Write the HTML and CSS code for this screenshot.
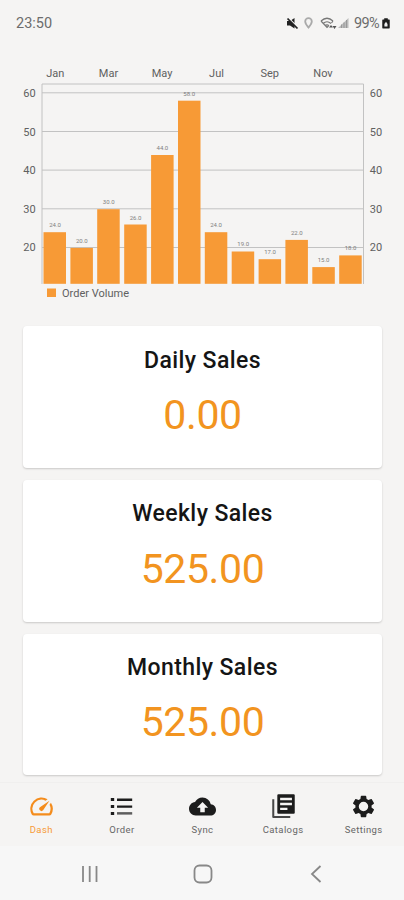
FILE: index.html
```html
<!DOCTYPE html>
<html lang="en">
<head>
<meta charset="utf-8">
<meta name="viewport" content="width=device-width, initial-scale=1">
<title>Dashboard</title>
<link rel="stylesheet" href="styles.css">
</head>
<body>
<header class="status">
  <span class="clock">23:50</span>
  <div class="indicators">
    <svg width="13" height="13" viewBox="0 0 13 13"><path d="M1 4h3L8.500 1v10.500L4 8.500H1z" fill="#222"/><path d="M2.200.8l10 10" stroke="#f5f4f3" stroke-width="1.500"/><path d="M1.500 1.500l10 10" stroke="#222" stroke-width="1.700"/></svg>
    <svg class="pin" width="9" height="12" viewBox="0 0 9 12"><path d="M4.500 10.500C2.500 8 1.200 6.500 1.200 4.500a3.300 3.300 0 0 1 6.600 0C7.800 6.500 6.500 8 4.500 10.500z" fill="none" stroke="#aaa" stroke-width="1.800"/></svg>
    <svg class="wifi" width="17" height="13" viewBox="0 0 17 13"><g fill="none" stroke="#777" stroke-width="1.200"><path d="M1 4q6-5.500 12 0M3 6.500q4-3.500 8 0M5 8.700q2-1.800 4 0M1 4l6 6.500L8.500 9M13 4l-1.500 2"/></g><path d="M9 10.500l2-2.500 2 2.500zM12.500 9h4l-2 3z" fill="#555"/></svg>
    <svg class="signal" width="11" height="12" viewBox="0 0 11 12"><path d="M0 11L10.500 1v10z" fill="#bbb"/><path d="M3.500 7.500V11M6 5.500V11M8.500 3V11" stroke="#999"/></svg>
    <span class="percent">99%</span>
    <svg class="battery" width="8" height="11" viewBox="0 0 9 12"><path d="M2.500 0h4v1.500H8q.7 0 .7.700v8.600q0 .8-.7.800H1q-.7 0-.7-.8V2.200q0-.7.700-.7h1.500z" fill="#1c1c1c"/><path d="M4.500 4L2.700 6.500v3h3.500v-3z" fill="#eee"/></svg>
  </div>
</header>

<main>
  <svg class="chart" width="404" height="260" viewBox="0 50 404 260" role="img" aria-label="Order Volume">
    <path class="grid" d="M42 92.800H363.500M42 131.500H363.500M42 170.100H363.500M42 208.800H363.500M42 247.500H363.500"/>
    <path class="frame" d="M42 284V84H363.500V284"/>
    <g class="bars">
      <rect x="43.500" y="232.200" width="22.500" height="51.600"/>
      <rect x="70.400" y="247.900" width="22.500" height="35.900"/>
      <rect x="97.200" y="209.200" width="22.500" height="74.600"/>
      <rect x="124.200" y="224.500" width="22.500" height="59.300"/>
      <rect x="151.100" y="155" width="22.500" height="128.800"/>
      <rect x="178" y="100.700" width="22.500" height="183.100"/>
      <rect x="204.800" y="232.200" width="22.500" height="51.600"/>
      <rect x="231.700" y="251.500" width="22.500" height="32.300"/>
      <rect x="258.600" y="259.200" width="22.500" height="24.600"/>
      <rect x="285.400" y="239.900" width="22.500" height="43.900"/>
      <rect x="312.300" y="267.100" width="22.500" height="16.700"/>
      <rect x="339.200" y="255.400" width="22.500" height="28.400"/>
    </g>
    <g class="values">
      <text x="55" y="227">24.0</text><text x="81.800" y="242.700">20.0</text><text x="108.700" y="204">30.0</text><text x="135.500" y="219.500">26.0</text><text x="162.400" y="150">44.0</text><text x="189.200" y="95.500">58.0</text><text x="216.100" y="227">24.0</text><text x="243.200" y="246.300">19.0</text><text x="270" y="254">17.0</text><text x="296.800" y="234.700">22.0</text><text x="323.600" y="262">15.0</text><text x="350.500" y="250">18.0</text>
    </g>
    <g class="axis">
      <text x="55.300" y="77">Jan</text><text x="108.500" y="77">Mar</text><text x="162" y="77">May</text><text x="216.500" y="77">Jul</text><text x="269.700" y="77">Sep</text><text x="323" y="77">Nov</text>
      <text x="29.500" y="96.800">60</text><text x="29.500" y="135.500">50</text><text x="29.500" y="174.100">40</text><text x="29.500" y="212.700">30</text><text x="29.500" y="251.300">20</text>
      <text x="376" y="96.800">60</text><text x="376" y="135.500">50</text><text x="376" y="174.100">40</text><text x="376" y="212.700">30</text><text x="376" y="251.300">20</text>
      <text x="95.500" y="297">Order Volume</text>
    </g>
    <rect class="key" x="47" y="288.500" width="9" height="8.500"/>
  </svg>

  <div class="cards">
    <section class="card"><h2>Daily Sales</h2><p>0.00</p></section>
    <section class="card"><h2>Weekly Sales</h2><p>525.00</p></section>
    <section class="card"><h2>Monthly Sales</h2><p>525.00</p></section>
  </div>
</main>

<nav class="tabs">
  <a class="tab active">
    <svg width="27" height="27" viewBox="0 0 24 24"><path d="M20.380 8.570l-1.230 1.850a8 8 0 0 1-.22 7.580H5.070A8 8 0 0 1 15.580 6.850l1.850-1.230A10 10 0 0 0 3.350 19a2 2 0 0 0 1.720 1h13.850a2 2 0 0 0 1.740-1 10 10 0 0 0-.27-10.440zM10.590 15.410a2 2 0 0 0 2.830 0l5.660-8.490-8.490 5.660a2 2 0 0 0 0 2.830z"/></svg>
    <span>Dash</span></a>
  <a class="tab">
    <svg width="27" height="27" viewBox="0 0 24 24"><path d="M2.500 4.500h3v2.700h-3zM8 4.800h13.500v2.300H8zM2.500 10.700h3v2.700h-3zM8 11h13.500v2.200H8zM2.500 16.800h3v2.700h-3z"/><path d="M8 17h13.500v2.200H8z" opacity=".7"/></svg>
    <span>Order</span></a>
  <a class="tab">
    <svg width="27" height="27" viewBox="0 0 24 24"><path d="M19.350 10.040C18.670 6.590 15.640 4 12 4 9.110 4 6.600 5.640 5.350 8.040 2.340 8.360 0 10.910 0 14c0 3.310 2.690 6 6 6h13c2.760 0 5-2.240 5-5 0-2.640-2.050-4.780-4.650-4.960zM14 13v4h-4v-4H7l5-5 5 5h-3z"/></svg>
    <span>Sync</span></a>
  <a class="tab">
    <svg width="27" height="27" viewBox="0 0 24 24"><path fill-rule="evenodd" d="M7.500 1h13.500q1 0 1 1v15.500q0 1-1 1H7.500q-1 0-1-1V2q0-1 1-1zM9 4.300v2.200h10.500V4.300zM9 8.700v2.200h10.500V8.700zM9 13v2.200h6.500V13z"/><path d="M2 5.500h1.800v15H18v1.800H3q-1 0-1-1z" opacity=".8"/></svg>
    <span>Catalogs</span></a>
  <a class="tab">
    <svg width="27" height="27" viewBox="0 0 24 24"><path fill-rule="evenodd" d="M19.140 12.940c.04-.3.060-.61.060-.94s-.02-.64-.07-.94l2.030-1.580a.49.49 0 0 0 .12-.61l-1.920-3.320a.49.49 0 0 0-.59-.22l-2.390.96a7 7 0 0 0-1.620-.94L14.400 2.810a.48.48 0 0 0-.48-.41h-3.840a.47.47 0 0 0-.47.410L9.250 5.350a7.200 7.200 0 0 0-1.620.94l-2.390-.96a.48.48 0 0 0-.59.220L2.740 8.870a.47.47 0 0 0 .12.610l2.030 1.580a6 6 0 0 0 0 1.880l-2.030 1.580a.49.49 0 0 0-.12.610l1.920 3.320c.12.220.37.290.59.220l2.390-.96c.5.380 1.030.7 1.620.94l.36 2.540c.05.240.24.410.48.410h3.840c.24 0 .44-.17.470-.41l.36-2.540a7 7 0 0 0 1.620-.94l2.390.96c.22.080.47 0 .59-.22l1.920-3.320a.47.47 0 0 0-.12-.61zM12 16.200a4.200 4.200 0 1 1 0-8.400 4.200 4.200 0 0 1 0 8.400z"/></svg>
    <span>Settings</span></a>
</nav>

<footer class="system">
  <svg width="20" height="20" viewBox="0 0 20 20"><path d="M3 2v16M9.700 2v16M16.500 2v16"/></svg>
  <svg width="20" height="20" viewBox="0 0 20 20"><rect x="1.500" y="1.500" width="17" height="17" rx="5"/></svg>
  <svg width="20" height="20" viewBox="0 0 20 20"><path d="M14.500 2L6 10l8.500 8"/></svg>
</footer>
</body>
</html>
```
FILE: styles.css
```css
* { box-sizing: border-box; }

body {
  margin: 0;
  height: 900px;
  display: flex;
  flex-direction: column;
  overflow: hidden;
  background: #f5f4f3;
  font-family: Roboto, "Liberation Sans", sans-serif;
}

.status {
  height: 50px;
  flex: none;
  display: flex;
  justify-content: space-between;
  align-items: center;
  padding: 0 14px 4px 16px;
  color: #6c6c6c;
}

.clock { font-size: 14.500px; }
.indicators { display: flex; align-items: center; }
.indicators > :first-child { margin-left: -5px; }
.pin { margin-left: 5px; }
.wifi { margin-left: 7px; }
.signal { margin-left: 1px; }
.percent { margin-left: 5px; font-size: 14.500px; letter-spacing: -0.6px; }
.battery { margin-left: 3px; }

main { height: 732px; flex: none; overflow: hidden; }

.chart { display: block; }
.grid, .frame { fill: none; stroke: #c2c2c2; stroke-width: 1; }
.bars, .key { fill: #f79a36; }
.chart text { text-anchor: middle; fill: #606060; }
.axis { font-size: 11px; }
.values { font-size: 6px; }
.chart .values text { fill: #808080; }

.cards {
  display: grid;
  gap: 12px;
  padding: 16.200px 22px 0 23px;
}

.card {
  height: 141.700px;
  padding-top: 18.400px;
  border-radius: 4px;
  background: #fff;
  box-shadow: 0 1px 2px rgba(0, 0, 0, .18);
  text-align: center;
}

.card h2 {
  margin: 0;
  font-size: 23px;
  line-height: 32px;
  font-weight: 500;
  letter-spacing: .4px;
  color: #151515;
}

.card p {
  margin: 13.500px 0 0;
  font-size: 41px;
  line-height: 50px;
  font-weight: 400;
  letter-spacing: -.4px;
  color: #f29420;
}

.tabs {
  height: 64px;
  flex: none;
  display: grid;
  grid-template-columns: repeat(5, 1fr);
  padding-left: 1px;
  border-top: 1px solid #f0efee;
  background: #f5f4f3;
}

.tab {
  display: flex;
  flex-direction: column;
  align-items: center;
  padding-top: 9.500px;
  color: #666;
  font-size: 9.500px;
  line-height: 12px;
  letter-spacing: .4px;
}

.tab svg { fill: #1c1c1c; margin-bottom: 4.500px; }
.tab.active { color: #f79a36; }
.tab.active svg { fill: #f48c1c; }

.system {
  height: 54px;
  flex: none;
  display: flex;
  justify-content: space-between;
  align-items: center;
  padding: 2px 78px 0 80px;
  background: #f7f7f7;
}

.system svg { fill: none; stroke: #888; stroke-width: 1.800; }
```
